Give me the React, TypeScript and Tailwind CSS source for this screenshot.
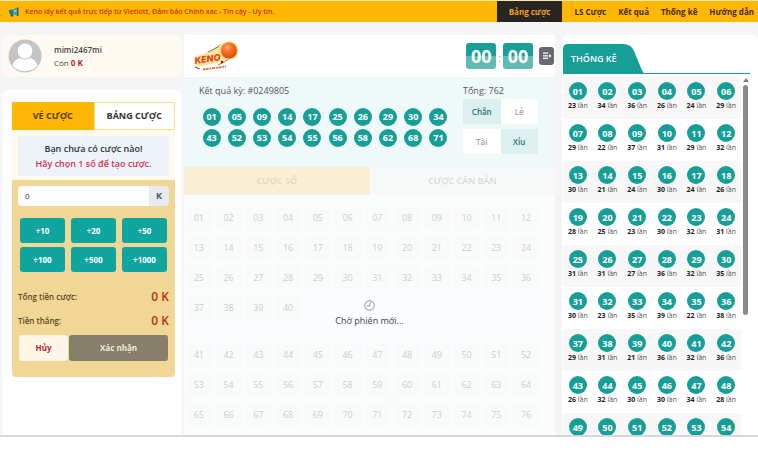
import { useState } from 'react';
import { clsx } from 'clsx';

const navItems = ['Bảng cược', 'LS Cược', 'Kết quả', 'Thống kê', 'Hướng dẫn'];

const results = [
  '01', '05', '09', '14', '17', '25', '26', '29', '30', '34',
  '43', '52', '53', '54', '55', '56', '58', '62', '68', '71',
];

const chips = [10, 20, 50, 100, 500, 1000];

const stats = [
  [23, 34, 36, 26, 24, 29],
  [29, 22, 37, 31, 29, 32],
  [30, 21, 24, 30, 24, 26],
  [28, 25, 23, 30, 32, 31],
  [31, 31, 27, 36, 32, 35],
  [30, 23, 35, 39, 22, 38],
  [29, 31, 21, 36, 32, 36],
  [26, 32, 30, 30, 34, 28],
  [null, null, null, null, null, null],
];

const pad = (n: number) => String(n).padStart(2, '0');

const range = (from: number, to: number) =>
  Array.from({ length: to - from + 1 }, (_, i) => from + i);

function Ball({ value }: { value: string }) {
  return (
    <span className="flex size-[18px] items-center justify-center rounded-full bg-[#179e96] text-[9px] font-bold text-white">
      {value}
    </span>
  );
}

function Megaphone() {
  return (
    <svg viewBox="0 0 24 20" className="h-[10px] w-3" aria-hidden="true">
      <path d="M2 6l9-1v9l-9-2z" fill="#1c7f93" />
      <path d="M10 5l9-4v17l-9-4z" fill="#3b9db0" />
      <path d="M18 1h3v17h-3z" fill="#25607a" />
      <path d="M4 12l5 1 2 6H6z" fill="#1d5f80" />
      <path d="M12 7l5-2v4l-5 1z" fill="#b7d36b" />
    </svg>
  );
}

function Avatar() {
  return (
    <svg viewBox="0 0 34 34" className="size-[34px] shrink-0" aria-hidden="true">
      <circle cx="17" cy="17" r="16.5" fill="#c4c4c4" />
      <path d="M4.500 26.500C6 21 10.500 18.500 17 18.500S28 21 29.500 26.500C26.500 30.300 22 32.200 17 32.200S7.500 30.300 4.500 26.500z" fill="#fff" />
      <circle cx="17" cy="12" r="8" fill="#fff" stroke="#c4c4c4" strokeWidth="1.200" />
    </svg>
  );
}

function KenoLogo() {
  return (
    <svg viewBox="0 0 46 32" className="h-8 w-[46px]" role="img" aria-label="Keno">
      <defs>
        <radialGradient id="ball" cx="0.4" cy="0.3" r="0.7">
          <stop offset="0" stopColor="#ffb070" />
          <stop offset="0.4" stopColor="#f8722a" />
          <stop offset="1" stopColor="#dd4a10" />
        </radialGradient>
      </defs>
      <path d="M1 17Q17 12 27 3L42 16Q30 22 18 24L2 27z" fill="#ffd36b" opacity="0.65" />
      <path d="M14 12Q21 9 25 6M24 25Q31 22 36 18" fill="none" stroke="#555" strokeWidth="0.800" />
      <circle cx="35" cy="10.500" r="9.200" fill="#ffd36b" />
      <circle cx="35" cy="10.500" r="8" fill="url(#ball)" />
      <text
        x="1"
        y="24"
        fontSize="9"
        fontWeight="800"
        fontStyle="italic"
        fontFamily="Inter, sans-serif"
        fill="#e8420f"
        transform="rotate(-8 1 24)"
      >
        KENO
      </text>
      <path d="M1 27l5 2" stroke="#555" strokeWidth="1" />
      <circle cx="28" cy="22" r="1.300" fill="#7a2a10" />
      <path d="M9 29.500L32 26.500" stroke="#e0532a" strokeWidth="1.800" strokeDasharray="2 0.700 3 0.800" opacity="0.85" />
    </svg>
  );
}

function TopBar() {
  return (
    <header className="flex h-[22px] items-stretch border-t border-[#ffe9ad] bg-[#ffb703]">
      <p className="flex flex-1 items-center gap-[5px] whitespace-nowrap pl-2 pt-px text-[7px] font-semibold text-[#c8350c]">
        <Megaphone />
        Keno lấy kết quả trực tiếp từ Vietlott, Đảm bảo Chính xác - Tin cậy - Uy tín.
      </p>
      <nav className="flex items-stretch whitespace-nowrap text-[8px] font-bold text-[#4a2b0b]">
        {navItems.map((item, i) => (
          <a
            key={item}
            href="#"
            className={clsx(
              'flex items-center pt-px',
              i === 0 ? 'mr-2 bg-[#262522] px-3 text-[#f0a01c]' : 'px-1',
              i > 0 && i < 4 && 'mr-1',
            )}
          >
            {item}
          </a>
        ))}
      </nav>
    </header>
  );
}

function BetSlip() {
  const [amount, setAmount] = useState('0');

  return (
    <aside className="flex w-[182px] shrink-0 flex-col gap-[13px]">
      <div className="ml-[2px] flex h-[42px] items-center gap-3 rounded-md bg-[#fefaf2] pl-[6px]">
        <Avatar />
        <div className="text-[8px] leading-[13px] text-[#444]">
          <p className="font-semibold">mimi2467mi</p>
          <p>
            Còn <b className="text-[#b01f35]">0 K</b>
          </p>
        </div>
      </div>

      <section className="ml-[3px] mr-px flex-1 rounded-t-md bg-white pl-[9px] pr-[6px] pt-3">
        <div className="grid h-[28px] grid-cols-2 text-[9px] font-bold">
          <button className="bg-[#ffb703] text-[#5b3a0c]">VÉ CƯỢC</button>
          <button className="border border-[#f8dd94] bg-white text-[#333]">BẢNG CƯỢC</button>
        </div>

        <div className="bg-[#fffaeb] px-[6px] pb-1 pt-[6px]">
          <div className="bg-[#eef2f9] py-[5px] text-center text-[9px] font-semibold leading-[15px] text-[#2b3440]">
            <p>Bạn chưa có cược nào!</p>
            <p className="text-[#cf3350]">Hãy chọn 1 số để tạo cược.</p>
          </div>
        </div>

        <div className="rounded-b-sm bg-[#f1d796] px-[6px] pb-4 pt-[6px]">
          <div className="flex h-5">
            <input
              aria-label="Số tiền"
              value={amount}
              onChange={(e) => setAmount(e.target.value)}
              className="min-w-0 flex-1 rounded-l-sm bg-white px-[7px] text-[8px] text-[#333] outline-none"
            />
            <span className="flex w-5 items-center justify-center rounded-r-sm bg-[#e7eaef] text-[9px] font-bold text-[#4b5563]">
              K
            </span>
          </div>

          <div className="mt-3 grid grid-cols-3 gap-x-[6px] gap-y-1 px-[2px]">
            {chips.map((chip) => (
              <button
                key={chip}
                onClick={() => setAmount(String(Number(amount) + chip))}
                className="h-[25px] rounded-[3px] bg-[#10a59f] text-[8px] font-bold text-white"
              >
                +{chip}
              </button>
            ))}
          </div>

          <dl className="mt-[13px] text-[8px] font-semibold text-[#5a4522]">
            <div className="flex h-6 items-center justify-between">
              <dt>Tổng tiền cược:</dt>
              <dd className="text-[12px] text-[#b8320f]">0 K</dd>
            </div>
            <div className="flex h-6 items-center justify-between">
              <dt>Tiền thắng:</dt>
              <dd className="text-[12px] text-[#b8320f]">0 K</dd>
            </div>
          </dl>

          <div className="mt-[2px] flex h-[26px] gap-px px-px text-[8px] font-bold">
            <button className="w-[49px] rounded-[3px] bg-[#fff6e8] text-[#b5233b]">Hủy</button>
            <button className="flex-1 rounded-[3px] bg-[#86806b] text-[#efeadb]">Xác nhận</button>
          </div>
        </div>
      </section>
    </aside>
  );
}

function TimeBox() {
  return (
    <span className="flex h-[26px] w-[30px] items-center justify-center rounded-[3px] bg-linear-to-b from-[#1a9f96] from-50% to-[#62bab4] to-50% text-[18px] font-bold leading-none text-white">
      00
    </span>
  );
}

function Outcome({ label, active }: { label: string; active?: boolean }) {
  return (
    <span
      className={clsx(
        'flex items-center justify-center text-[8px] font-semibold',
        active ? 'bg-[#dbf0ef] text-[#24766f]' : 'bg-white text-[#a5a5a5]',
      )}
    >
      {label}
    </span>
  );
}

function NumberGrid({ from, to }: { from: number; to: number }) {
  return (
    <div className="grid grid-cols-12">
      {range(from, to).map((n) => (
        <button key={n} className="mx-[2px] my-[3px] h-6 rounded-sm bg-[#f9fbfa] text-[9px] text-[#cccecd]">
          {pad(n)}
        </button>
      ))}
    </div>
  );
}

function Board() {
  return (
    <main className="flex min-w-0 flex-1 flex-col overflow-hidden bg-[#fafcfd]">
      <div className="flex h-[42px] shrink-0 items-center bg-white pl-[10px]">
        <KenoLogo />
        <div className="ml-auto flex items-center gap-[2px] text-[10px] text-[#999]">
          <TimeBox />
          <span className="pt-1 leading-none">:</span>
          <TimeBox />
        </div>
        <button
          aria-label="Mở lịch sử"
          className="ml-[6px] mr-px flex h-[18px] w-[15px] items-center justify-center rounded-[3px] bg-[#666a70]"
        >
          <svg viewBox="0 0 10 8" className="h-2 w-[10px]" fill="none" stroke="#fff" strokeWidth="1.200">
            <path d="M1 1.200h5M1 3.800h5M1 6.400h5" />
            <path d="M7 2l2.500 1.900L7 5.700z" fill="#fff" stroke="none" />
          </svg>
        </button>
      </div>

      <div className="flex h-[90px] shrink-0 bg-[#eff9f9] pl-[15px] pt-2 text-[9px] leading-3 text-[#555]">
        <div className="flex-1">
          <p>Kết quả kỳ: #0249805</p>
          <div className="mt-[11px] grid max-w-[252px] grid-cols-10 justify-items-center gap-y-[3px]">
            {results.map((n) => (
              <Ball key={n} value={n} />
            ))}
          </div>
        </div>
        <div className="mr-[17px] w-[75px]">
          <p>Tổng: 762</p>
          <div className="mt-[2px] grid h-[25px] grid-cols-2">
            <Outcome label="Chẵn" active />
            <Outcome label="Lẻ" />
          </div>
          <div className="mt-[5px] grid h-[25px] grid-cols-2">
            <Outcome label="Tài" />
            <Outcome label="Xỉu" active />
          </div>
        </div>
      </div>

      <div className="grid h-7 shrink-0 grid-cols-2 text-[9px] font-semibold">
        <button className="bg-[#faf0d5] text-[#e2dac3]">CƯỢC SỐ</button>
        <button className="bg-[#f7f9f8] text-[#d8dad9]">CƯỢC CĂN BẢN</button>
      </div>

      <div className="relative flex-1 pr-[14px] pt-2">
        <NumberGrid from={1} to={40} />
        <div className="mt-[17px]">
          <NumberGrid from={41} to={76} />
        </div>
        <div className="absolute inset-x-0 top-[105px] flex flex-col items-center gap-[4px] text-[9px] leading-3 text-[#444]">
          <svg viewBox="0 0 12 12" className="size-[11px]" fill="none" stroke="#777" strokeWidth="0.900">
            <circle cx="6" cy="6" r="5.200" />
            <path d="M7 2.500L6 6.500H3.200" />
          </svg>
          <p>Chờ phiên mới...</p>
        </div>
      </div>
    </main>
  );
}

function Stats() {
  return (
    <aside className="flex w-[196px] shrink-0 flex-col overflow-hidden rounded-t-md bg-white pl-px pt-[9px]">
      <div className="relative mr-2 h-[30px] shrink-0 border-b border-[#179e96]">
        <svg viewBox="0 0 82 30" className="absolute left-0 top-0 h-[30px] w-[82px]" fill="#179e96" aria-hidden="true">
          <path d="M0 30V5Q0 0 5 0H60Q68 0 71 7L78 24Q80 29 82 30z" />
        </svg>
        <h2 className="relative pl-2 text-[9px] font-semibold leading-[30px] text-white">THỐNG KÊ</h2>
      </div>

      <div className="flex min-h-0 flex-1">
        <div className="w-[178px] overflow-hidden pt-[3px]">
          {stats.map((row, i) => (
            <div key={i} className="grid h-[42px] grid-cols-6 pt-[5px] odd:bg-[#f7f7f7]">
              {row.map((count, j) => (
                <div key={j} className="flex flex-col items-center whitespace-nowrap text-[7px] leading-[11px] text-[#555]">
                  <Ball value={pad(i * 6 + j + 1)} />
                  {count !== null && (
                    <p>
                      <b className="text-[#222]">{count}</b> lần
                    </p>
                  )}
                </div>
              ))}
            </div>
          ))}
        </div>
        <div className="flex w-[9px] flex-col items-center gap-[3px] pt-1">
          <svg viewBox="0 0 6 4" className="h-1 w-[6px]" fill="#808080" aria-hidden="true">
            <path d="M3 0l3 4H0z" />
          </svg>
          <div className="h-[230px] w-[5px] rounded-full bg-[#8b8b8b]" />
        </div>
      </div>
    </aside>
  );
}

export default function App() {
  return (
    <div className="flex h-screen flex-col bg-white pb-[13px] font-['Open_Sans','Noto_Sans',sans-serif]">
      <TopBar />
      <div className="flex min-h-0 flex-1 overflow-hidden border-b-2 border-[#d5d7da] bg-[#f5f5f5] pt-[13px]">
        <BetSlip />
        <div className="ml-[2px] mr-[7px] flex min-w-0 flex-1">
          <Board />
        </div>
        <Stats />
      </div>
    </div>
  );
}
